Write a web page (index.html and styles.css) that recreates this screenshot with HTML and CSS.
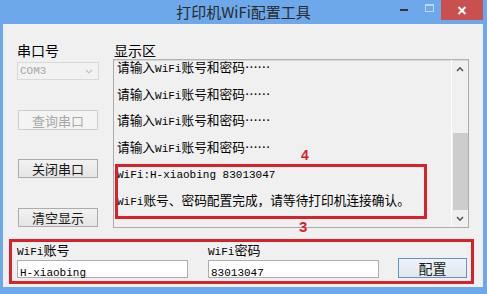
FILE: index.html
```html
<!DOCTYPE html>
<html lang="zh">
<head>
<meta charset="utf-8">
<title>打印机WiFi配置工具</title>
<link rel="stylesheet" href="styles.css">
</head>
<body>
<div class="window">
  <div class="titlebar">
    <div class="title">打印机WiFi配置工具</div>
    <div class="controls">
      <span class="ctl-min"></span>
      <span class="ctl-max"></span>
      <span class="ctl-close"><svg width="10" height="9" viewBox="0 0 10 9"><path d="M1.5 1 L8.5 8 M8.5 1 L1.5 8" stroke="#fff" stroke-width="2" fill="none"/></svg></span>
    </div>
  </div>
  <div class="client">
    <div class="top">
      <div class="leftcol">
        <div class="label">串口号</div>
        <div class="combo"><span class="a">COM3</span><svg width="8" height="5" viewBox="0 0 8 5"><path d="M1 1 L4 4 L7 1" stroke="#c4c4c4" stroke-width="1.2" fill="none"/></svg></div>
        <div class="btn disabled b1">查询串口</div>
        <div class="btn b2">关闭串口</div>
        <div class="btn b3">清空显示</div>
      </div>
      <div class="rightcol">
        <div class="label">显示区</div>
        <div class="textbox">
          <div class="content">
            <div class="line">请输入<span class="a">WiFi</span>账号和密码……</div>
            <div class="line">请输入<span class="a">WiFi</span>账号和密码……</div>
            <div class="line">请输入<span class="a">WiFi</span>账号和密码……</div>
            <div class="line">请输入<span class="a">WiFi</span>账号和密码……</div>
            <div class="line"><span class="a">WiFi:H-xiaobing 83013047</span></div>
            <div class="line"><span class="a">WiFi</span>账号、密码配置完成，请等待打印机连接确认。</div>
          </div>
          <div class="scrollbar">
            <div class="sb-btn"><svg width="8" height="6" viewBox="0 0 8 6"><path d="M1 5 L4 1.8 L7 5" stroke="#555" stroke-width="1.6" fill="none"/></svg></div>
            <div class="track"><div class="thumb"></div></div>
            <div class="sb-btn"><svg width="8" height="6" viewBox="0 0 8 6"><path d="M1 1 L4 4.2 L7 1" stroke="#555" stroke-width="1.6" fill="none"/></svg></div>
          </div>
        </div>
      </div>
    </div>
    <div class="bottom">
      <div class="field">
        <div class="flabel"><span class="a">WiFi</span>账号</div>
        <div class="input"><span class="a">H-xiaobing</span></div>
      </div>
      <div class="field">
        <div class="flabel"><span class="a">WiFi</span>密码</div>
        <div class="input"><span class="a">83013047</span></div>
      </div>
      <div class="btn default">配置</div>
    </div>
  </div>
  <div class="mark box4"></div>
  <div class="mark num4">4</div>
  <div class="mark box3"></div>
  <div class="mark num3">3</div>
</div>
</body>
</html>
```

FILE: styles.css
```css
html, body {
  margin: 0;
  padding: 0;
}
body {
  width: 487px;
  height: 294px;
  overflow: hidden;
  background: #6ca8ea;
  font-family: "Noto Sans CJK SC", sans-serif;
  color: #000;
}
.window {
  position: relative;
  width: 487px;
  height: 294px;
  display: flex;
  flex-direction: column;
  background: #6ca8ea;
}
.titlebar {
  height: 24px;
  padding: 0 4px;
  display: grid;
  grid-template-columns: 1fr auto 1fr;
}
.title {
  grid-column: 2;
  font-size: 15px;
  line-height: 24px;
  color: #2a2a2a;
  white-space: nowrap;
}
.controls {
  grid-column: 3;
  justify-self: end;
  display: flex;
  align-items: flex-start;
}
.ctl-min {
  width: 8px;
  height: 2px;
  margin-top: 9px;
  margin-right: 17px;
  background: #333;
}
.ctl-max {
  width: 7px;
  height: 5px;
  margin-top: 4px;
  margin-right: 7px;
  border: 1px solid rgba(255, 255, 255, 0.55);
  border-top-width: 2px;
}
.ctl-close {
  width: 42px;
  height: 20px;
  background: #c9504f;
  display: flex;
  align-items: center;
  justify-content: center;
}
.client {
  margin: 0 4px 0 3px;
  height: 263px;
  background: #f0f0f0;
}
.top {
  display: flex;
  padding: 18px 0 0 14px;
  gap: 14px;
}
.leftcol {
  width: 82px;
  display: flex;
  flex-direction: column;
}
.label {
  font-size: 14px;
  line-height: 16px;
  height: 16px;
  white-space: nowrap;
}
.a {
  font-family: "Liberation Mono", monospace;
  font-size: 11px;
}
.combo {
  margin-top: 4px;
  height: 18px;
  box-sizing: border-box;
  border: 1px solid #d9d9d9;
  background: #f2f2f2;
  display: flex;
  align-items: center;
  justify-content: space-between;
  padding: 0 5px 0 2px;
  color: #a6a6a6;
}
.btn {
  box-sizing: border-box;
  width: 80px;
  height: 19px;
  margin-left: 1px;
  border: 1px solid #acacac;
  background: linear-gradient(#f2f2f2, #e5e5e5);
  font-size: 13px;
  display: flex;
  align-items: center;
  justify-content: center;
  color: #1a1a1a;
}
.btn.disabled {
  border-color: #cfcfcf;
  background: #f4f4f4;
  color: #a8a8a8;
}
.b1 { margin-top: 30px; height: 20px; }
.b2 { margin-top: 29px; }
.b3 { margin-top: 30px; }
.rightcol {
  width: 356px;
  display: flex;
  flex-direction: column;
}
.rightcol .label {
  padding-left: 1px;
}
.textbox {
  margin-top: 1px;
  width: 356px;
  height: 169px;
  box-sizing: border-box;
  border: 1px solid #acacac;
  border-top-color: #b4b4b4;
  box-shadow: inset 0 1px 0 #d8d8d8;
  display: flex;
  background: #f0f0f0;
}
.content {
  flex: 1;
  padding-left: 3px;
  font-size: 12.7px;
}
.line {
  height: 13px;
  line-height: 13px;
  margin-bottom: 13.5px;
  white-space: nowrap;
}
.scrollbar {
  width: 17px;
  box-sizing: border-box;
  border-left: 1px solid #ffffff;
  display: flex;
  flex-direction: column;
}
.sb-btn {
  height: 17px;
  display: flex;
  align-items: center;
  justify-content: center;
}
.track {
  flex: 1;
}
.thumb {
  margin: 56px auto 0;
  width: 15px;
  height: 77px;
  background: #cdcdcd;
}
.bottom {
  display: flex;
  align-items: flex-end;
  padding: 14px 0 0 14px;
}
.field {
  width: 171px;
  display: flex;
  flex-direction: column;
}
.field + .field {
  margin-left: 20px;
}
.flabel {
  font-size: 13px;
  line-height: 16px;
  height: 16px;
  white-space: nowrap;
}
.input {
  margin-top: 2px;
  height: 18px;
  box-sizing: border-box;
  border: 1px solid #abadb3;
  background: #fff;
  padding-left: 2px;
  line-height: 16px;
}
.btn.default {
  width: 69px;
  height: 20px;
  margin-left: 19px;
  border-color: #5d95c8;
  background: linear-gradient(#eef3f8, #e0e8f0);
  font-size: 14px;
}
.mark {
  position: absolute;
}
.box4, .box3 {
  box-sizing: border-box;
  border: 3px solid #d8222b;
}
.box4 {
  left: 115px;
  top: 164px;
  width: 312px;
  height: 55px;
}
.box3 {
  left: 9px;
  top: 239px;
  width: 465px;
  height: 45px;
}
.num4, .num3 {
  font-family: "Liberation Sans", sans-serif;
  font-weight: bold;
  color: #d8222b;
  line-height: 16px;
}
.num4 {
  left: 301px;
  top: 147px;
  font-size: 14px;
}
.num3 {
  left: 299px;
  top: 219px;
  font-size: 15px;
}
```
